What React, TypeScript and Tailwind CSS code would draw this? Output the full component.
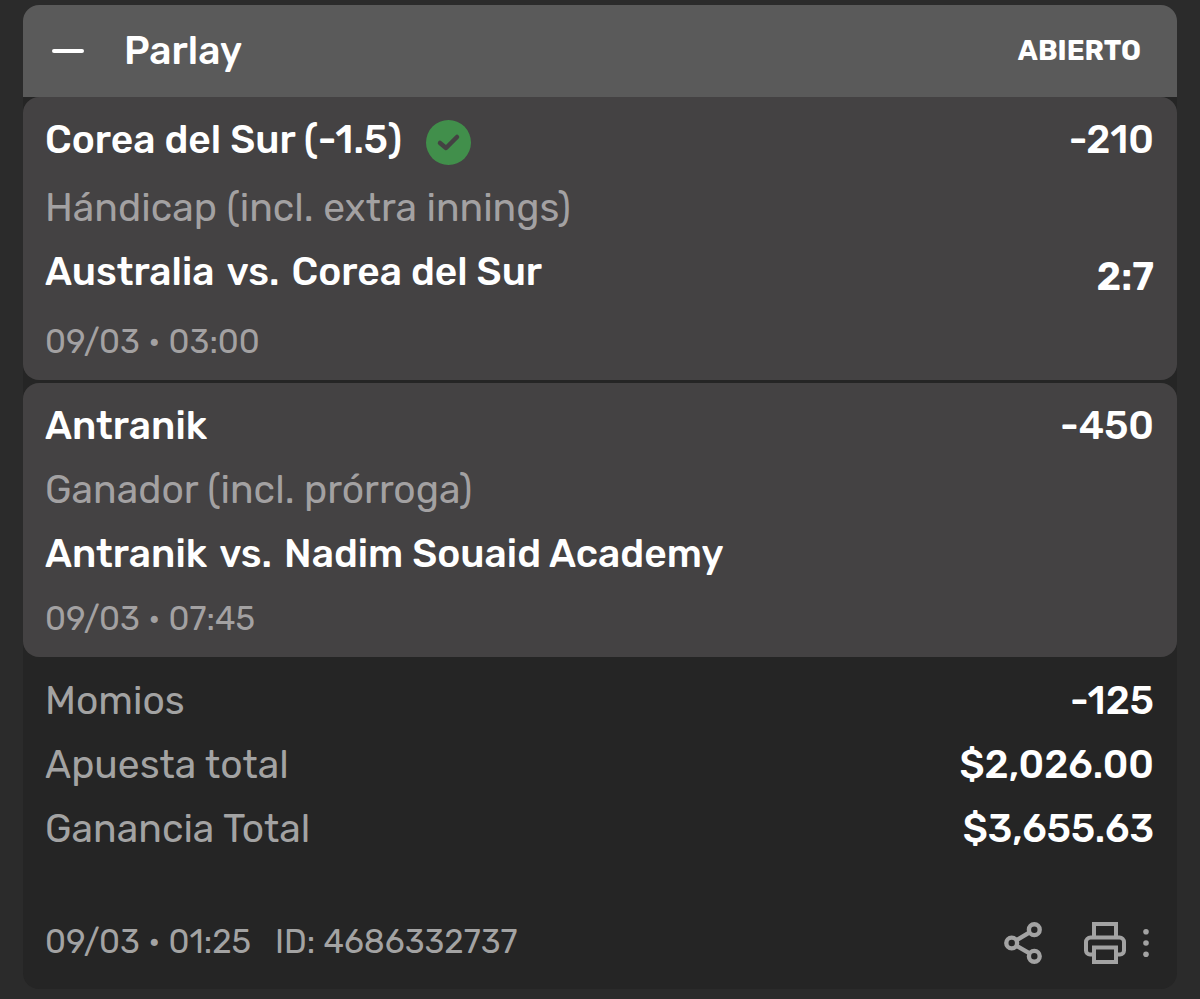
import clsx from "clsx";

type Pick = {
  name: string;
  odds: string;
  market: string;
  home: string;
  away: string;
  date: string;
  score?: string;
  won?: boolean;
};

const picks: Pick[] = [
  {
    name: "Corea del Sur (-1.5)",
    odds: "-210",
    market: "Hándicap (incl. extra innings)",
    home: "Australia",
    away: "Corea del Sur",
    date: "09/03 • 03:00",
    score: "2:7",
    won: true,
  },
  {
    name: "Antranik",
    odds: "-450",
    market: "Ganador (incl. prórroga)",
    home: "Antranik",
    away: "Nadim Souaid Academy",
    date: "09/03 • 07:45",
  },
];

const totals = [
  { label: "Momios", value: "-125" },
  { label: "Apuesta total", value: "$2,026.00" },
  { label: "Ganancia Total", value: "$3,655.63" },
];

function WonIcon() {
  return (
    <svg width="45" height="45" viewBox="0 0 45 45" role="img" aria-label="Ganada">
      <circle cx="22.5" cy="22.5" r="22.5" fill="#418f4b" />
      <path
        d="M14 23 20 28 31 17"
        fill="none"
        stroke="#444243"
        strokeWidth="4.500"
        strokeLinecap="round"
        strokeLinejoin="round"
      />
    </svg>
  );
}

function ShareIcon() {
  return (
    <svg width="38" height="42" viewBox="0 0 38 42" fill="none" stroke="currentColor" strokeWidth="4.400">
      <circle cx="30.300" cy="7.700" r="5.400" />
      <circle cx="7.700" cy="21" r="5.400" />
      <circle cx="30.300" cy="34.300" r="5.400" />
      <path d="M12.600 18.100 25.600 10.400M12.600 23.900 25.600 31.400" />
    </svg>
  );
}

function PrintIcon() {
  return (
    <svg width="42" height="42" viewBox="0 0 42 42" fill="none" stroke="currentColor" strokeWidth="4">
      <path d="M10 15.500V2h22v13.500" />
      <path d="M10 32.500H6a4 4 0 0 1-4-4V20a4.500 4.500 0 0 1 4.500-4.500h29A4.500 4.500 0 0 1 40 20v8.500a4 4 0 0 1-4 4h-4" />
      <path d="M10 25.500h22V40H10z" />
    </svg>
  );
}

function DotsIcon() {
  return (
    <svg width="6" height="30" viewBox="0 0 6 30" fill="currentColor">
      <circle cx="3" cy="3.700" r="2.800" />
      <circle cx="3" cy="15" r="2.800" />
      <circle cx="3" cy="26.300" r="2.800" />
    </svg>
  );
}

function PickCard({ pick }: { pick: Pick }) {
  return (
    <article className="rounded-2xl bg-[#444243] pt-[11px] pr-[23px] pb-[7px] pl-[22px]">
      <div className={clsx("flex justify-between font-medium text-white", pick.won ? "h-[68px]" : "h-16")}>
        <div className="flex items-center gap-6">
          <h2 className="flex h-16 items-center self-start">{pick.name}</h2>
          {pick.won && <WonIcon />}
        </div>
        <span className="flex h-16 items-center">{pick.odds}</span>
      </div>
      <p className="flex h-16 items-center text-[#a3a1a2]">{pick.market}</p>
      <div className={clsx("flex justify-between font-medium text-white", pick.score ? "h-[69px]" : "h-16")}>
        <h3 className="flex h-16 items-center gap-3">
          <span>{pick.home}</span>
          <span>vs.</span>
          <span>{pick.away}</span>
        </h3>
        {pick.score && <span className="flex h-16 items-center self-end font-semibold">{pick.score}</span>}
      </div>
      <p className="flex h-16 items-center text-[33px] text-[#a3a1a2]">{pick.date}</p>
    </article>
  );
}

export default function App() {
  return (
    <main className="min-h-screen bg-[#2b2b2b] px-[23px] pt-[5px] font-[Rubik,Roboto,sans-serif] text-[39px] leading-none">
      <section className="rounded-2xl bg-[#252525]">
        <header className="flex h-[92px] items-center justify-between rounded-t-2xl bg-[#5a5a5a] pr-9 pl-[29px] text-white">
          <div className="flex items-center gap-10">
            <button type="button" aria-label="Contraer" className="flex h-8 w-8 items-center">
              <span className="h-1 w-full rounded-full bg-white" />
            </button>
            <h1 className="font-medium">Parlay</h1>
          </div>
          <span className="text-[28px] font-bold">ABIERTO</span>
        </header>
        <div className="flex flex-col gap-[3px]">
          {picks.map((pick) => (
            <PickCard key={pick.name} pick={pick} />
          ))}
        </div>
        <dl className="pt-3 pr-[23px] pb-8 pl-[22px]">
          {totals.map((total) => (
            <div key={total.label} className="flex h-16 items-center justify-between">
              <dt className="text-[#a3a3a3]">{total.label}</dt>
              <dd className="font-medium text-white">{total.value}</dd>
            </div>
          ))}
        </dl>
        <footer className="flex h-24 items-center justify-between rounded-b-2xl pr-7 pl-[22px] text-[33px] text-[#a3a3a3]">
          <div className="flex gap-6">
            <span>09/03 • 01:25</span>
            <span>ID: 4686332737</span>
          </div>
          <div className="flex items-center pt-1">
            <button type="button" aria-label="Compartir">
              <ShareIcon />
            </button>
            <button type="button" aria-label="Imprimir" className="ml-[42px]">
              <PrintIcon />
            </button>
            <button type="button" aria-label="Más opciones" className="ml-[17px]">
              <DotsIcon />
            </button>
          </div>
        </footer>
      </section>
    </main>
  );
}
